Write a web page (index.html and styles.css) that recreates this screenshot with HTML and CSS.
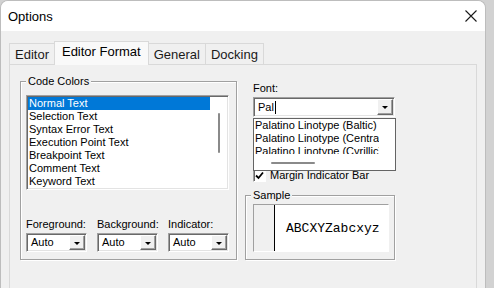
FILE: index.html
```html
<!DOCTYPE html>
<html>

<head>
    <meta charset="utf-8">
    <link rel="stylesheet" href="styles.css">
</head>

<body>
    <div class="window">
        <div class="titlebar">
            <span class="title">Options</span>
            <svg class="close" width="12" height="12" viewBox="0 0 12 12">
                <path d="M0.5 0.5L11.5 11.5M11.5 0.5L0.5 11.5" stroke="#1a1a1a" stroke-width="1.1" fill="none" />
            </svg>
        </div>
        <div class="client">
            <div class="tabs">
                <div class="tab">Editor</div>
                <div class="tab active">Editor Format</div>
                <div class="tab">General</div>
                <div class="tab">Docking</div>
            </div>
            <div class="panel">
                <fieldset class="group colors">
                    <legend>Code Colors</legend>
                    <div class="listbox">
                        <ul class="items">
                            <li class="sel">Normal Text</li>
                            <li>Selection Text</li>
                            <li>Syntax Error Text</li>
                            <li>Execution Point Text</li>
                            <li>Breakpoint Text</li>
                            <li>Comment Text</li>
                            <li>Keyword Text</li>
                        </ul>
                        <div class="vscroll">
                            <div class="thumb"></div>
                        </div>
                    </div>
                    <div class="pickers">
                        <div class="picker">
                            <label>Foreground:</label>
                            <div class="combo"><span class="value">Auto</span><span class="drop"></span></div>
                        </div>
                        <div class="picker">
                            <label>Background:</label>
                            <div class="combo"><span class="value">Auto</span><span class="drop"></span></div>
                        </div>
                        <div class="picker">
                            <label>Indicator:</label>
                            <div class="combo"><span class="value">Auto</span><span class="drop"></span></div>
                        </div>
                    </div>
                </fieldset>

                <div class="right">
                    <label class="font-label">Font:</label>
                    <div class="combo font-combo"><span class="value">Pal<i class="caret"></i></span><span class="drop"></span></div>

                    <!-- open font list lies over the checkbox -->
                    <div class="dropdown">
                        <div class="fonts">
                            <div>Palatino Linotype (Baltic)</div>
                            <div>Palatino Linotype (Central Europe)</div>
                            <div>Palatino Linotype (Cyrillic)</div>
                        </div>
                        <div class="hscroll"></div>
                    </div>

                    <div class="check-row">
                        <span class="checkbox">
                            <svg width="9" height="9" viewBox="0 0 9 9">
                                <path d="M1 4.5L3.5 7L8 1.5" stroke="#000" stroke-width="1.8" fill="none" />
                            </svg>
                        </span>
                        <span>Margin Indicator Bar</span>
                    </div>

                    <fieldset class="group sample">
                        <legend>Sample</legend>
                        <div class="sample-box">
                            <div class="margin-bar"></div>
                            <div class="sample-text">ABCXYZabcxyz</div>
                        </div>
                    </fieldset>
                </div>
            </div>
        </div>
    </div>
</body>

</html>
```

FILE: styles.css
```css
* {
    box-sizing: border-box;
}

body {
    margin: 0;
    background: #d2d2d2;
    font-family: "Liberation Sans", Arial, sans-serif;
    font-size: 11px;
    color: #000;
}

.window {
    width: 486px;
    height: 288px;
    background: #f0f0f0;
    border: 1px solid #bdbdbd;
    border-bottom: 0;
    border-radius: 8px 8px 0 0;
    overflow: hidden;
}

.titlebar {
    height: 30px;
    background: #fff;
    display: flex;
    align-items: center;
    justify-content: space-between;
    padding: 0 8px 0 7px;
    font-size: 13px;
}

.client {
    padding: 10px 8px 0;
}

/* tabs */
.tabs {
    display: flex;
    align-items: flex-end;
    height: 24px;
    margin-bottom: -1px;
    position: relative;
    z-index: 1;
}

.tab {
    height: 21px;
    margin-bottom: 1px;
    margin-right: -1px;
    padding: 3px 5px 0;
    border: 1px solid #d9d9d9;
    border-bottom: 0;
    background: #f0f0f0;
    font-size: 13px;
    line-height: 15px;
    color: #1a1a1a;
}

.tab.active {
    height: 24px;
    margin-bottom: 0;
    padding: 2px 7px 0;
    background: #f9f9f9;
    position: relative;
    z-index: 1;
    color: #000;
}

.panel {
    height: 230px;
    border: 1px solid #d9d9d9;
    background: #f0f0f0;
    display: flex;
    align-items: flex-start;
    gap: 8px;
    padding: 10px;
}

/* group boxes */
.group {
    margin: 0;
    min-width: 0;
    padding: 7px 7px 7px 5px;
    border: 1px solid #a0a0a0;
    box-shadow: inset 1px 1px #fff, 1px 1px #fff;
}

.group legend {
    padding: 0 2px;
    line-height: 13px;
    background: #f0f0f0;
}

.colors {
    width: 217px;
}

/* sunken controls */
.listbox,
.combo {
    background: #fff;
    border: 1px solid;
    border-color: #a0a0a0 #fff #fff #a0a0a0;
    box-shadow: inset 1px 1px #696969, inset -1px -1px #e3e3e3;
    padding: 1px;
}

.listbox {
    display: flex;
    width: 203px;
    height: 95px;
}

.items {
    list-style: none;
    margin: 0;
    padding: 0;
    flex: 1;
}

.items li {
    height: 13px;
    line-height: 13px;
    padding-left: 1px;
    white-space: nowrap;
}

.items .sel {
    background: #0078d7;
    color: #fff;
}

.vscroll {
    width: 17px;
    background: #fff;
}

.thumb {
    width: 2px;
    height: 40px;
    margin: 16px 0 0 8px;
    background: #8a8a8a;
    border-radius: 1px;
}

.pickers {
    display: flex;
    gap: 10px;
    margin-top: 28px;
}

.picker {
    width: 61px;
    display: flex;
    flex-direction: column;
    gap: 2px;
}

.picker label {
    line-height: 13px;
    white-space: nowrap;
}

.combo {
    height: 19px;
    display: flex;
    align-items: stretch;
}

.combo .value {
    flex: 1;
    padding-left: 3px;
    line-height: 15px;
    white-space: nowrap;
}

.drop {
    width: 16px;
    background: #f0f0f0;
    border: 1px solid;
    border-color: #fff #696969 #696969 #fff;
    box-shadow: inset -1px -1px #a0a0a0;
    display: flex;
    align-items: center;
    justify-content: center;
}

.drop::after {
    content: "";
    border-left: 3px solid transparent;
    border-right: 3px solid transparent;
    border-top: 3px solid #000;
    margin-top: 1px;
}

/* right column */
.right {
    width: 150px;
    display: flex;
    flex-direction: column;
    position: relative;
}

.font-label {
    margin: 7px 0 2px 8px;
    line-height: 13px;
}

.font-combo {
    margin-left: 8px;
    width: 142px;
    height: 20px;
}

.font-combo .value {
    line-height: 16px;
}

.caret {
    display: inline-block;
    width: 1px;
    height: 13px;
    background: #000;
    vertical-align: -3px;
    margin-left: 1px;
}

.dropdown {
    position: absolute;
    left: 8px;
    top: 43px;
    width: 143px;
    height: 53px;
    background: #fff;
    border: 1px solid #646464;
    z-index: 2;
}

.fonts {
    width: 125px;
    height: 35px;
    overflow: hidden;
    padding-left: 1px;
}

.fonts div {
    line-height: 13px;
    white-space: nowrap;
}

.hscroll {
    width: 44px;
    height: 2px;
    margin: 8px 0 0 17px;
    background: #8a8a8a;
    border-radius: 1px;
}

.check-row {
    display: flex;
    align-items: center;
    gap: 4px;
    height: 13px;
    margin: 52px 0 0 8px;
    line-height: 13px;
}

.checkbox {
    width: 13px;
    height: 13px;
    background: #fff;
    border: 1px solid;
    border-color: #a0a0a0 #fff #fff #a0a0a0;
    box-shadow: inset 1px 1px #696969;
    display: flex;
    align-items: center;
    justify-content: center;
}

.sample {
    width: 150px;
    margin-top: 7px;
    padding: 2px 5px 7px 7px;
}

.sample legend {
    margin-left: -2px;
}

.sample-box {
    height: 48px;
    display: flex;
    border: 1px solid;
    border-color: #a0a0a0 #fff #fff #a0a0a0;
}

.margin-bar {
    width: 21px;
    background: #f0f0f0;
    border-right: 1px solid #000;
}

.sample-text {
    flex: 1;
    background: #fff;
    display: flex;
    align-items: center;
    padding-left: 11px;
    font-family: "Liberation Mono", "Courier New", monospace;
    font-size: 13px;
}
```
